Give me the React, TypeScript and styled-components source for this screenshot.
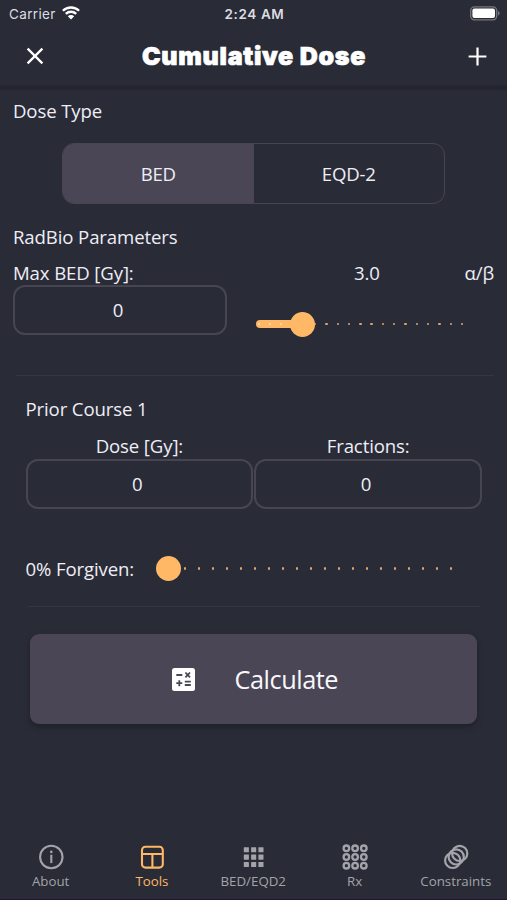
import React from "react";
import styled, { createGlobalStyle } from "styled-components";

const color = {
  bg: "#292b36",
  raised: "#4a4656",
  border: "#474551",
  text: "#eeeef6",
  accent: "#ffb866",
  muted: "#a3a4a9",
};

const GlobalStyle = createGlobalStyle`
  * { box-sizing: border-box; }
  body { margin: 0; background: ${color.bg}; }
  button { font: inherit; color: inherit; background: none; border: 0; padding: 0; letter-spacing: inherit; }
  svg { display: block; flex: none; }
`;

const Screen = styled.div`
  width: 507px;
  height: 900px;
  display: flex;
  flex-direction: column;
  overflow: hidden;
  background: ${color.bg};
  color: ${color.text};
  font-family: "Open Sans", "Noto Sans", sans-serif;
  font-size: 18.6px;
  line-height: 26px;
`;

const StatusBar = styled.div`
  height: 28px;
  display: grid;
  grid-template-columns: 1fr auto 1fr;
  align-items: center;
  padding: 0 7px 0 9px;
  font: 400 13.5px/28px Inter, sans-serif;
  color: #dcdce2;
`;

const Carrier = styled.div`
  display: flex;
  align-items: center;
  gap: 6px;
  letter-spacing: 0.35px;
  svg { margin-top: -2px; }
`;

const Clock = styled.div`
  font-weight: 600;
  font-size: 13.5px;
  letter-spacing: 0.6px;
`;

const Battery = styled.div`
  justify-self: end;
  margin-top: -2px;
`;

const Header = styled.header`
  height: 57px;
  display: grid;
  grid-template-columns: 60px 1fr 60px;
  align-items: center;
  padding-bottom: 1px;
`;

const HeaderShade = styled.div`
  height: 6px;
  background: linear-gradient(#282832, #24242f 35%, #25252f 65%, ${color.bg});
`;

const HeaderButton = styled.button<{ $side: "left" | "right" }>`
  display: flex;
  justify-content: ${(p) => (p.$side === "left" ? "flex-start" : "flex-end")};
  padding: ${(p) => (p.$side === "left" ? "0 0 0 26px" : "0 20px 0 0")};
`;

const Title = styled.h1`
  margin: 0;
  padding-left: 1px;
  text-align: center;
  font: 900 25px/30px Inter, sans-serif;
  letter-spacing: 0.7px;
  -webkit-text-stroke: 0.7px #fff;
  color: #fff;
  white-space: nowrap;
`;

const Content = styled.main`
  flex: 1;
  display: flex;
  flex-direction: column;
  padding: 7px 13px 0;
`;

const Label = styled.div<{ $align?: string }>`
  height: 25px;
  white-space: nowrap;
  text-align: ${(p) => p.$align ?? "left"};
  letter-spacing: -0.12px;
`;

const Segmented = styled.div`
  width: 383px;
  height: 61px;
  margin: 20px 0 20px 49px;
  display: grid;
  grid-template-columns: 1fr 1fr;
  border: 1.5px solid ${color.border};
  border-radius: 12px;
  overflow: hidden;
`;

const Segment = styled.button<{ $active?: boolean }>`
  letter-spacing: -0.2px;
  background: ${(p) => (p.$active ? color.raised : "transparent")};
`;

const Parameters = styled.section`
  height: 115px;
  margin-top: 11px;
  display: grid;
  grid-template-columns: 214px 1fr;
  column-gap: 28px;
`;

const RatioValues = styled.div`
  display: grid;
  grid-template-columns: 1fr 30px;
  padding-left: 15px;
`;

const NumberInput = styled.input`
  width: 100%;
  height: 50px;
  display: block;
  margin: 0;
  padding: 0 6px 1px 2px;
  text-align: center;
  font: inherit;
  color: inherit;
  background: transparent;
  border: 2px solid ${color.border};
  border-radius: 12px;
  outline: none;
`;

const Rule = styled.hr<{ $inset: string }>`
  width: auto;
  height: 1px;
  margin: 0;
  margin-inline: ${(p) => p.$inset};
  border: 0;
  background: #363642;
`;

const Course = styled.section`
  padding: 20px 12px 0 12.5px;
`;

const Fields = styled.div`
  display: grid;
  grid-template-columns: 1fr 1fr;
  column-gap: 1px;
  margin-top: 12px;

  ${Label} {
    height: 26px;
  }
`;

const Forgiven = styled.div`
  height: 59px;
  margin-top: 38px;
  padding-bottom: 16px;
  display: grid;
  grid-template-columns: 142.5px 1fr;
  align-items: center;
`;

const Slider = styled.div<{ $width: number; $pad: number }>`
  width: ${(p) => p.$width}px;
  height: 26px;
  position: relative;
  display: flex;
  align-items: center;
  justify-content: space-between;
  padding: 0 ${(p) => p.$pad}px;
`;

const Tick = styled.span<{ $light?: boolean }>`
  width: 2.4px;
  height: 2.4px;
  border-radius: 50%;
  position: relative;
  z-index: 1;
  background: ${(p) => (p.$light ? "#ffe0b8" : "#dfa468")};
`;

const Fill = styled.span`
  position: absolute;
  left: 0;
  top: 9px;
  height: 8px;
  border-radius: 4px;
  background: ${color.accent};
`;

const Thumb = styled.span`
  position: absolute;
  z-index: 2;
  top: 0.5px;
  width: 25px;
  height: 25px;
  margin-left: -12.5px;
  border-radius: 50%;
  background: ${color.accent};
`;

const RatioSlider = styled.div`
  padding-top: 26px;
  margin-left: 1px;
`;

const Calculate = styled.button`
  width: 447px;
  height: 90px;
  margin: 27px 0 0 17px;
  display: flex;
  align-items: center;
  padding-left: 141.5px;
  gap: 40px;
  border-radius: 9px;
  background: ${color.raised};
  box-shadow: 0 3px 6px rgba(0, 0, 0, 0.28);
  font-size: 25.3px;
  letter-spacing: -0.45px;
  color: #f8f8fc;
`;

const TabBar = styled.nav`
  height: 60px;
  display: grid;
  grid-template-columns: repeat(5, 101.3px);
  border-bottom: 1px solid #211735;
`;

const Tab = styled.button<{ $active?: boolean }>`
  display: flex;
  flex-direction: column;
  align-items: center;
  padding-top: 4px;
  gap: 2px;
  font-size: 13.3px;
  line-height: 18px;
  color: ${(p) => (p.$active ? color.accent : color.muted)};
`;

type SliderProps = { width: number; pad: number; ticks: number; value: number };

function TickSlider({ width, pad, ticks, value }: SliderProps) {
  const step = (width - pad * 2 - 2.4) / (ticks - 1);
  return (
    <Slider $width={width} $pad={pad}>
      {value > 0 && <Fill style={{ width: value }} />}
      {Array.from({ length: ticks }, (_, i) => (
        <Tick key={i} $light={pad + i * step < value} />
      ))}
      <Thumb style={{ left: value }} />
    </Slider>
  );
}

const WifiIcon = () => (
  <svg width="18" height="14" viewBox="0 0 18 14" fill="none" stroke="#fff" strokeWidth="2.3">
    <path d="M.9 4.8a11.6 11.6 0 0 1 16.2 0M3.8 7.9a7.4 7.4 0 0 1 10.4 0" />
    <path d="M9 13.5 5.8 10.3a4.6 4.6 0 0 1 6.4 0Z" fill="#fff" stroke="none" />
  </svg>
);

const BatteryIcon = () => (
  <svg width="30" height="15" viewBox="0 0 30 15">
    <rect x=".7" y=".8" width="26" height="13" rx="3.8" fill="none" stroke="#77777f" strokeWidth="1.3" />
    <rect x="2.4" y="2.5" width="22.6" height="9.6" rx="2" fill="#fff" />
    <path d="M28 5v4.6c2.2-.9 2.2-3.7 0-4.6Z" fill="#77777f" />
  </svg>
);

const CalculatorIcon = () => (
  <svg width="23" height="23" viewBox="0 0 23 23" stroke="#4a4656" strokeWidth="1.8">
    <rect width="23" height="23" rx="2.5" fill="#fff" stroke="none" />
    <path d="M4.3 7h6M13.4 4.5l4.6 4.8M18 4.5l-4.6 4.8M4.3 15.2h6M7.3 12.2v6M12.8 13.7h6M12.8 17h6" />
  </svg>
);

const InfoIcon = () => (
  <svg width="26" height="26" viewBox="0 0 26 26" fill="none" stroke="currentColor" strokeWidth="2.1">
    <circle cx="13.3" cy="13" r="11.2" />
    <path d="M13.3 10.7v8.4" />
    <circle cx="13.3" cy="7.9" r="1.3" fill="currentColor" stroke="none" />
  </svg>
);

const LayoutIcon = () => (
  <svg width="26" height="26" viewBox="0 0 26 26" fill="none" stroke="currentColor" strokeWidth="2.1">
    <rect x="3" y="2.8" width="20.8" height="20.8" rx="3.4" />
    <path d="M3 10h20.8M13.4 10v13.6" />
  </svg>
);

const cells = [0, 1, 2].flatMap((r) => [0, 1, 2].map((c) => [c, r]));

const GridIcon = () => (
  <svg width="26" height="26" viewBox="0 0 26 26" fill="currentColor">
    {cells.map(([c, r]) => (
      <rect key={`${c}${r}`} x={3.8 + c * 7.3} y={3.2 + r * 7.4} width="5.1" height="5.1" rx=".4" />
    ))}
  </svg>
);

const RingsIcon = () => (
  <svg width="26" height="26" viewBox="0 0 26 26" fill="none" stroke="currentColor" strokeWidth="2.3">
    {cells.map(([c, r]) => (
      <circle key={`${c}${r}`} cx={4.4 + c * 8.7} cy={4.3 + r * 8.7} r="2.8" />
    ))}
  </svg>
);

const OverlapIcon = () => (
  <svg width="26" height="26" viewBox="0 0 26 26" fill="none" stroke="currentColor" strokeWidth="2.2">
    <circle cx="16.7" cy="9.4" r="7.6" />
    <circle cx="13.2" cy="12.9" r="7.6" />
    <circle cx="9.7" cy="16.4" r="7.6" />
  </svg>
);

const tabs = [
  { name: "About", Icon: InfoIcon },
  { name: "Tools", Icon: LayoutIcon, active: true },
  { name: "BED/EQD2", Icon: GridIcon },
  { name: "Rx", Icon: RingsIcon },
  { name: "Constraints", Icon: OverlapIcon },
];

export default function App() {
  return (
    <>
      <GlobalStyle />
      <Screen>
        <StatusBar>
          <Carrier>
            Carrier
            <WifiIcon />
          </Carrier>
          <Clock>2:24 AM</Clock>
          <Battery>
            <BatteryIcon />
          </Battery>
        </StatusBar>
        <Header>
          <HeaderButton $side="left" aria-label="Close">
            <svg width="18" height="18" viewBox="0 0 18 18" stroke="#fff" strokeWidth="2.3">
              <path d="m1.6 1.6 14.8 14.8m0-14.8L1.6 16.4" />
            </svg>
          </HeaderButton>
          <Title>Cumulative Dose</Title>
          <HeaderButton $side="right" aria-label="Add">
            <svg width="19" height="19" viewBox="0 0 19 19" stroke="#fff" strokeWidth="2.2">
              <path d="M9.5.6v17.8M.6 9.5h17.8" />
            </svg>
          </HeaderButton>
        </Header>
        <HeaderShade />
        <Content>
          <Label>Dose Type</Label>
          <Segmented>
            <Segment $active>BED</Segment>
            <Segment>EQD-2</Segment>
          </Segmented>
          <Label>RadBio Parameters</Label>
          <Parameters>
            <div>
              <Label>Max BED [Gy]:</Label>
              <NumberInput defaultValue="0" aria-label="Max BED" />
            </div>
            <div>
              <RatioValues>
                <Label $align="center">3.0</Label>
                <Label $align="right">α/β</Label>
              </RatioValues>
              <RatioSlider>
                <TickSlider width={209} pad={1.5} ticks={19} value={46.7} />
              </RatioSlider>
            </div>
          </Parameters>
          <Rule $inset="3px 0" />
          <Course>
            <Label>Prior Course 1</Label>
            <Fields>
              <div>
                <Label $align="center">Dose [Gy]:</Label>
                <NumberInput defaultValue="0" aria-label="Dose" />
              </div>
              <div>
                <Label $align="center">Fractions:</Label>
                <NumberInput defaultValue="0" aria-label="Fractions" />
              </div>
            </Fields>
            <Forgiven>
              <Label>0% Forgiven:</Label>
              <TickSlider width={286} pad={1.5} ticks={21} value={0} />
            </Forgiven>
          </Course>
          <Rule $inset="15px 14px" />
          <Calculate>
            <CalculatorIcon />
            Calculate
          </Calculate>
        </Content>
        <TabBar>
          {tabs.map(({ name, Icon, active }) => (
            <Tab key={name} $active={active}>
              <Icon />
              {name}
            </Tab>
          ))}
        </TabBar>
      </Screen>
    </>
  );
}
